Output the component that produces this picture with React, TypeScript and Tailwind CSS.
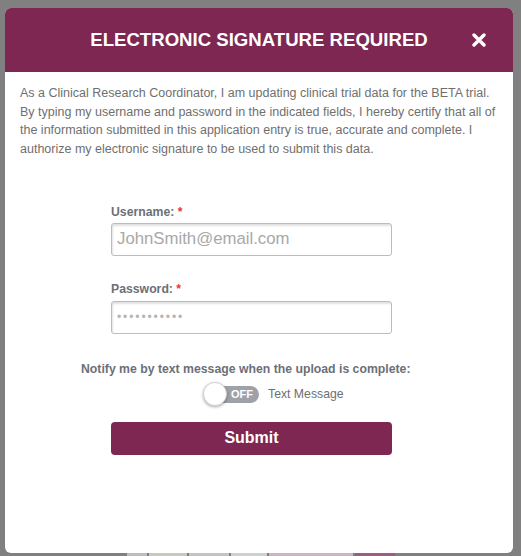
import React from 'react'

export default function App() {
  return (
    <div
      className="h-[556px] w-full overflow-hidden bg-[#808080]"
      style={{ fontFamily: '"Liberation Sans", Arial, sans-serif' }}
    >
      <div className="ml-[5px] mt-[8px] flex h-[545px] w-[508px] flex-col overflow-hidden rounded-[6px] bg-white">
        <div className="relative flex h-[64px] shrink-0 items-center justify-center bg-[#7d2752]">
          <h1 className="text-[18.6px] font-bold text-white">ELECTRONIC SIGNATURE REQUIRED</h1>
          <button className="absolute right-[27px] top-[25px] text-white" aria-label="Close">
            <svg width="14" height="14" viewBox="0 0 14 14">
              <path d="M2 2 L12 12 M12 2 L2 12" stroke="white" strokeWidth="3.4" strokeLinecap="round" />
            </svg>
          </button>
        </div>

        <div className="pl-[15px] pr-[10px] pt-[12px] text-[12.5px] leading-[18.7px] text-[#6f6f6f]">
          As a Clinical Research Coordinator, I am updating clinical trial data for the BETA trial. By typing my
          username and password in the indicated fields, I hereby certify that all of the information submitted in
          this application entry is true, accurate and complete. I authorize my electronic signature to be used to
          submit this data.
        </div>

        <div className="ml-[106px] mt-[46px] flex w-[281px] flex-col">
          <label className="text-[12.25px] font-bold leading-[14px] text-[#6b7078]">
            Username: <span className="text-[#e53935]">*</span>
          </label>
          <input
            className="mt-[4px] h-[33px] w-full rounded-[3px] border border-[#b9bcc1] px-[5px] text-[16.75px] text-[#555] shadow-[inset_1px_2px_2px_rgba(0,0,0,0.12)] outline-none placeholder:text-[#a8a8a8]"
            placeholder="JohnSmith@email.com"
          />

          <label className="mt-[26px] text-[12.25px] font-bold leading-[14px] text-[#6b7078]">
            Password: <span className="text-[#e53935]">*</span>
          </label>
          <input
            type="password"
            defaultValue="abcdefghijk"
            className="mt-[5px] h-[33px] w-full rounded-[3px] border border-[#b9bcc1] px-[5px] text-[12px] tracking-[1.9px] text-[#b5b5b5] shadow-[inset_1px_2px_2px_rgba(0,0,0,0.12)] outline-none"
          />
        </div>

        <div className="ml-[76px] mt-[28px] text-[12.25px] font-bold leading-[14px] text-[#6b7078]">
          Notify me by text message when the upload is complete:
        </div>

        <div className="ml-[198px] mt-[6px] flex items-center">
          <div className="relative h-[24px] w-[56px]">
            <div className="absolute left-[6px] top-[4px] flex h-[17px] w-[50px] items-center justify-end rounded-full bg-[#9ea2a8] pr-[6px]">
              <span className="text-[11px] font-bold text-white">OFF</span>
            </div>
            <div className="absolute left-0 top-0 h-[24px] w-[24px] rounded-full border border-[#d4d4d4] bg-white shadow-[0_1px_3px_rgba(0,0,0,0.35)]" />
          </div>
          <span className="ml-[9px] text-[12.25px] text-[#6f6f6f]">Text Message</span>
        </div>

        <button className="ml-[106px] mt-[16px] h-[33px] w-[281px] rounded-[4px] bg-[#7d2752] text-[16px] font-bold text-white">
          Submit
        </button>
      </div>

      <div className="ml-[127px] flex h-[3px] gap-[2px]">
        <div className="w-[20px] bg-[#bdbdbd]" />
        <div className="w-[38px] bg-[#c8c8c0]" />
        <div className="w-[40px] bg-[#c4c4c4]" />
        <div className="w-[36px] bg-[#d0d0d0]" />
        <div className="w-[84px] bg-[#c9b6c0]" />
        <div className="w-[40px] bg-[#9a5f7c]" />
      </div>
    </div>
  )
}
